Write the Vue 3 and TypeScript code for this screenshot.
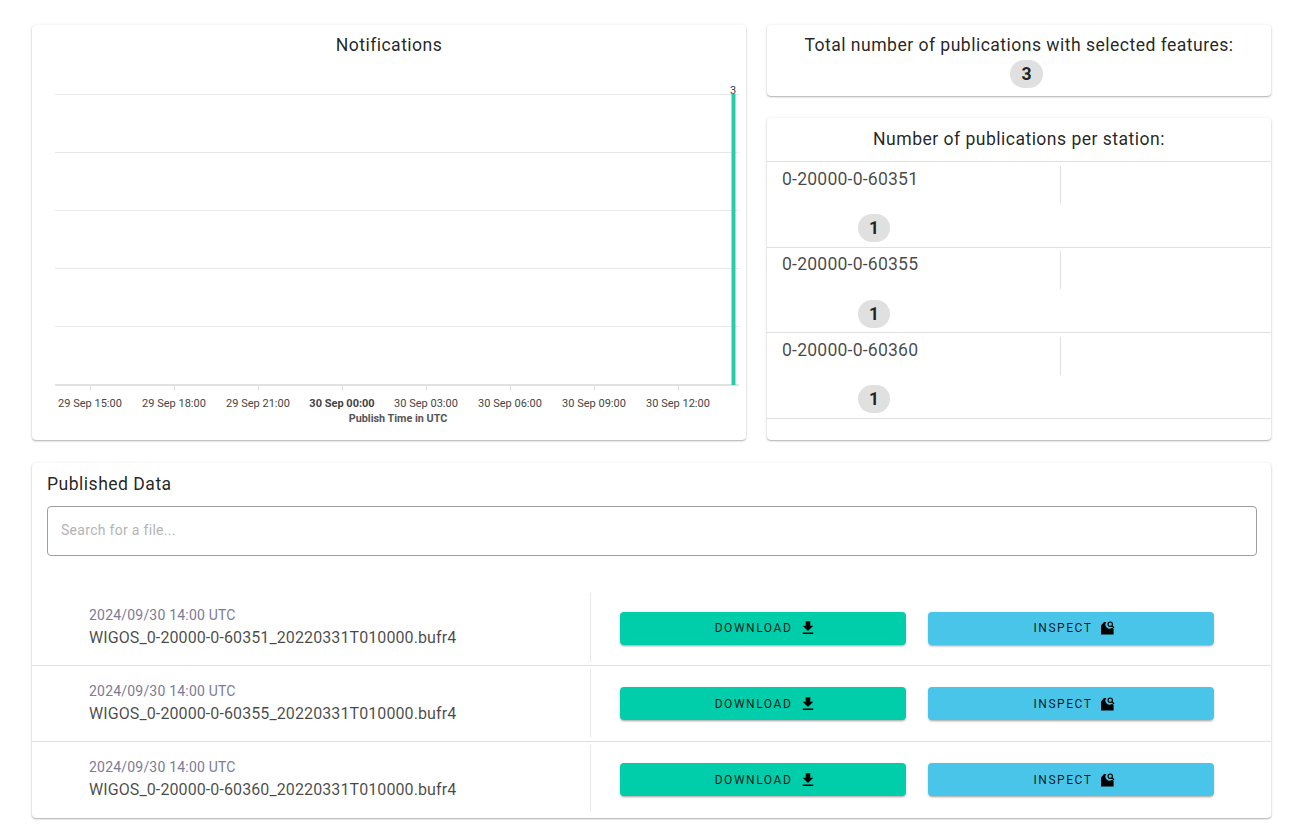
<script setup lang="ts">
const gridYs: number[] = [94, 152, 210, 268, 326];
const ticks = [
  { x: 90, label: '29 Sep 15:00', bold: false },
  { x: 174, label: '29 Sep 18:00', bold: false },
  { x: 258, label: '29 Sep 21:00', bold: false },
  { x: 342, label: '30 Sep 00:00', bold: true },
  { x: 426, label: '30 Sep 03:00', bold: false },
  { x: 510, label: '30 Sep 06:00', bold: false },
  { x: 594, label: '30 Sep 09:00', bold: false },
  { x: 678, label: '30 Sep 12:00', bold: false },
];
const stations: string[] = ['0-20000-0-60351', '0-20000-0-60355', '0-20000-0-60360'];
const files = [
  { date: '2024/09/30 14:00 UTC', name: 'WIGOS_0-20000-0-60351_20220331T010000.bufr4' },
  { date: '2024/09/30 14:00 UTC', name: 'WIGOS_0-20000-0-60355_20220331T010000.bufr4' },
  { date: '2024/09/30 14:00 UTC', name: 'WIGOS_0-20000-0-60360_20220331T010000.bufr4' },
];
</script>

<template>
  <main class="page">
    <div class="top">
      <section class="card chart-card">
        <h2 class="title chart-title">Notifications</h2>
        <svg class="chart" width="714" height="369" viewBox="32 71 714 369">
          <line v-for="y in gridYs" :key="y" x1="55" x2="739" :y1="y + 0.5" :y2="y + 0.5" stroke="#e8e8e8" />
          <line x1="55" x2="739" y1="385" y2="385" stroke="#e2e2e2" stroke-width="2" />
          <line v-for="t in ticks" :key="t.x" :x1="t.x + 0.5" :x2="t.x + 0.5" y1="385" y2="391" stroke="#e2e2e2" />
          <rect x="731.5" y="94" width="4" height="291" fill="#2acba8" />
          <text x="733" y="94" class="bar-label" text-anchor="middle">3</text>
          <text
            v-for="t in ticks"
            :key="t.label"
            :x="t.x"
            y="407"
            text-anchor="middle"
            :class="['tick', { 'tick-bold': t.bold }]"
          >{{ t.label }}</text>
          <text x="398" y="422" text-anchor="middle" class="axis-name">Publish Time in UTC</text>
        </svg>
      </section>

      <div class="side">
        <section class="card total-card">
          <h2 class="title">Total number of publications with selected features:</h2>
          <span class="chip chip-total">3</span>
        </section>

        <section class="card station-card">
          <h2 class="title station-title">Number of publications per station:</h2>
          <div v-for="s in stations" :key="s" class="station-row">
            <div class="station-head">
              <span class="station-name">{{ s }}</span>
            </div>
            <span class="chip chip-station">1</span>
          </div>
        </section>
      </div>
    </div>

    <section class="card data-card">
      <h2 class="data-title">Published Data</h2>
      <div class="search">Search for a file...</div>
      <div class="list">
        <div v-for="f in files" :key="f.name" class="row">
          <div class="file">
            <div class="date">{{ f.date }}</div>
            <div class="name">{{ f.name }}</div>
          </div>
          <div class="actions">
            <button class="btn btn-download">
              DOWNLOAD
              <svg class="icon" viewBox="0 0 24 24"><path d="M5,20H19V18H5M19,9H15V3H9V9H5L12,16L19,9Z" /></svg>
            </button>
            <button class="btn btn-inspect">
              INSPECT
              <svg class="icon" viewBox="0 0 24 24">
                <path d="M8 4 L4 8.5 V20.5 H20.8 V13.4 L18.8 11.6 A5.4 5.4 0 0 1 11.2 4 Z" />
                <circle cx="16.3" cy="6.9" r="2.9" fill="none" stroke="#000" stroke-width="1.6" />
                <path d="M18.4 9 L21.4 11.8" stroke="#000" stroke-width="1.8" />
              </svg>
            </button>
          </div>
        </div>
      </div>
    </section>
  </main>
</template>

<style>
body {
  background: #fff;
}
</style>

<style scoped>
.page {
  width: 1304px;
  height: 833px;
  box-sizing: border-box;
  padding: 25px 33px 0 32px;
  font-family: Roboto, "Liberation Sans", sans-serif;
  color: rgba(0, 0, 0, 0.87);
  overflow: hidden;
}
.top {
  display: flex;
  gap: 21px;
  height: 415px;
  margin-bottom: 23px;
}
.card {
  background: #fff;
  border-radius: 4px;
  box-shadow: 0 1px 1px -1px rgba(0, 0, 0, 0.3), 0 1px 2px rgba(0, 0, 0, 0.28), 0 0 4px rgba(0, 0, 0, 0.05);
}
.chart-card {
  width: 714px;
  flex: none;
  overflow: hidden;
}
.title {
  margin: 0;
  font-size: 17.6px;
  font-weight: 400;
  letter-spacing: 0.46px;
  line-height: 29px;
  text-align: center;
}
.chart-title {
  height: 40px;
  padding-top: 6px;
  box-sizing: content-box;
}
.chart {
  display: block;
}
.bar-label {
  font-size: 11px;
  fill: #333f48;
}
.tick {
  font-size: 11px;
  fill: #444;
}
.tick-bold,
.axis-name {
  font-weight: 700;
}
.axis-name {
  font-size: 10.8px;
  fill: #555;
}
.side {
  flex: 1;
  display: flex;
  flex-direction: column;
  gap: 22px;
}
.total-card {
  height: 71px;
  padding-top: 6px;
  box-sizing: border-box;
}
.chip {
  display: flex;
  align-items: center;
  justify-content: center;
  width: 32px;
  height: 28px;
  border-radius: 14px;
  background: #e0e0e0;
  font-weight: 700;
  font-size: 17.6px;
}
.chip-total {
  margin: 0 0 0 243px;
  width: 33px;
}
.station-card {
  flex: 1;
}
.station-title {
  height: 44px;
  padding-top: 7px;
  box-sizing: border-box;
  border-bottom: 1px solid #e0e0e0;
}
.station-row {
  height: 85.5px;
  box-sizing: border-box;
  border-bottom: 1px solid #e0e0e0;
  padding-top: 4px;
}
.station-row:nth-of-type(2) {
  padding-top: 3.4px;
}
.station-row:nth-of-type(2) .chip-station {
  margin-top: 11.1px;
}
.station-head {
  width: 294px;
  height: 38px;
  box-sizing: border-box;
  border-right: 1px solid #e0e0e0;
  padding-left: 15px;
}
.station-name {
  font-size: 17.6px;
  line-height: 26px;
  letter-spacing: 0.2px;
  color: rgba(0, 0, 0, 0.72);
  display: block;
}
.chip-station {
  margin: 10px 0 0 91px;
}
.data-card {
  height: 355px;
  padding-top: 8px;
  box-sizing: border-box;
}
.data-title {
  margin: 0 0 8px 15px;
  font-size: 17.6px;
  font-weight: 400;
  letter-spacing: 0.47px;
  line-height: 27px;
}
.search {
  margin: 0 14px 0 15px;
  height: 50px;
  box-sizing: border-box;
  border: 1px solid #9e9e9e;
  border-radius: 4px;
  padding: 0 13px;
  line-height: 46px;
  font-size: 14px;
  letter-spacing: 0.3px;
  color: #b4b4b4;
}
.list {
  margin-top: 34px;
}
.row {
  display: grid;
  grid-template-columns: 559px 1fr;
  height: 76px;
  box-sizing: border-box;
  border-bottom: 1px solid #e0e0e0;
  padding: 3px 0;
}
.row:nth-child(2) {
  padding: 4px 0;
}
.row:nth-child(2) .file {
  padding-top: 10px;
}
.row:first-child .actions {
  padding-top: 1px;
}
.row:last-child {
  border-bottom: none;
  padding: 3px 0 6px;
}
.row:last-child .actions {
  padding-top: 2px;
}
.file {
  border-right: 1px solid #e8e8e8;
  padding: 11px 0 0 57px;
}
.date {
  font-size: 14px;
  line-height: 22px;
  letter-spacing: 0.2px;
  color: #7b7b96;
}
.name {
  font-size: 16px;
  line-height: 23px;
  letter-spacing: 0.1px;
  color: rgba(0, 0, 0, 0.72);
}
.actions {
  display: flex;
  align-items: center;
  gap: 22px;
  padding-left: 29px;
}
.btn {
  width: 286px;
  height: 33px;
  border: none;
  border-radius: 4px;
  display: flex;
  align-items: center;
  justify-content: center;
  gap: 7px;
  font-family: inherit;
  font-size: 12px;
  font-weight: 400;
  letter-spacing: 1.55px;
  color: rgba(0, 0, 0, 0.87);
  box-shadow: 0 2px 2px -1px rgba(0, 0, 0, 0.25), 0 1px 3px rgba(0, 0, 0, 0.15);
  padding: 0 0 0 6px;
}
.btn-download {
  background: #00cdaa;
}
.btn-inspect {
  background: #48c5e8;
  padding-left: 7px;
  gap: 5px;
}
.icon {
  width: 18px;
  height: 18px;
  fill: #000;
  flex: none;
}
</style>
